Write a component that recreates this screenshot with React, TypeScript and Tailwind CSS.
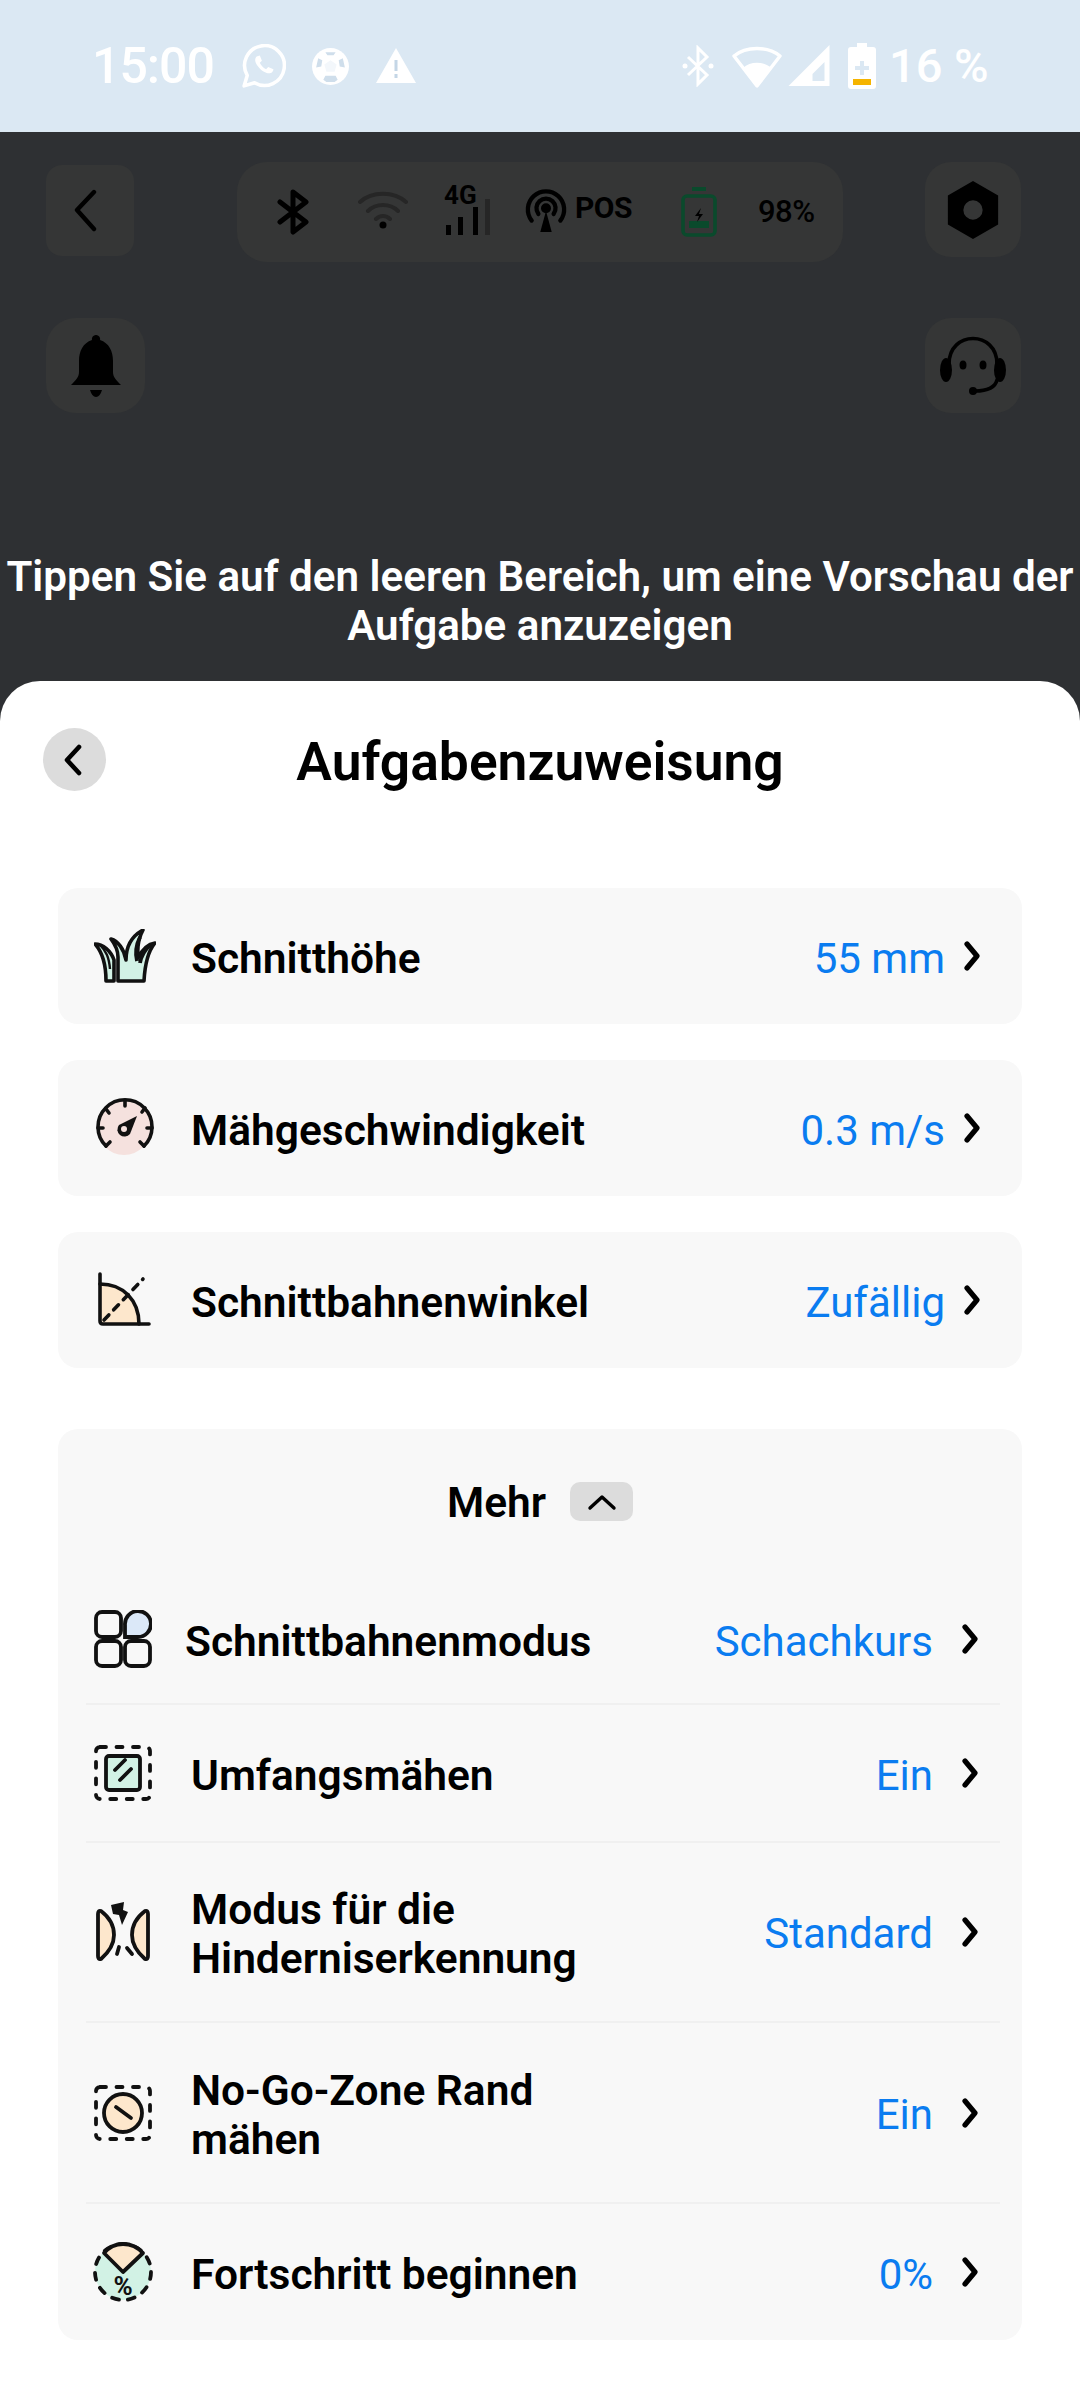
const font = { fontFamily: 'Roboto, sans-serif' };

const Chevron = () => (
  <svg width="18" height="30" viewBox="0 0 18 30" fill="none" stroke="#000" strokeWidth="5.2" strokeLinecap="round" strokeLinejoin="round" className="shrink-0">
    <path d="M4 3l10 12L4 27" />
  </svg>
);

const GrassIcon = () => (
  <svg width="62" height="54" viewBox="0 0 62 54" fill="#d2f2e5" stroke="#111" strokeWidth="3.6" strokeLinejoin="round">
    <path d="M1 15C9 15 17 22 20 31V52H12C12 38 9 24 1 15Z" />
    <path d="M24 52V28C24 20 20 14 17 10C24 12 30 20 32 31C32 18 38 7 49 1C44 10 43 18 44 29C48 21 54 15 61 14C55 21 51 34 50 52Z" />
    <path d="M6 16C12 22 15 28 16 40" fill="none" strokeWidth="2.4" />
    <path d="M46 8C42 16 41 24 43 32M56 16C50 22 47 28 46 34" fill="none" strokeWidth="3.8" />
  </svg>
);

const GaugeIcon = () => (
  <svg width="60" height="60" viewBox="0 0 60 60" fill="none" stroke="#111" strokeWidth="3.6" strokeLinecap="round">
    <circle cx="29" cy="30" r="27" fill="#f5e1de" stroke="none" />
    <path d="M11 48A27 27 0 1 1 49 48" />
    <path d="M30 3V8M11 11l3 4M3 30h5M50 10l-3 4M57 30h-5M11 48l4-4M49 48l-4-4" />
    <path d="M42 18L35 36A7 7 0 1 1 24 27Z" fill="#111" stroke="none" />
    <circle cx="29" cy="31" r="3" fill="#f5e1de" stroke="none" />
  </svg>
);

const AngleIcon = () => (
  <svg width="56" height="56" viewBox="0 0 56 56" fill="none" stroke="#111" strokeWidth="3.6" strokeLinecap="round" strokeLinejoin="round">
    <path d="M3 12C26 12 42 28 42 52H3Z" fill="#fde7cc" stroke="none" />
    <path d="M3 12C26 12 42 28 42 52" />
    <path d="M3 2V49Q3 52 6 52H52" />
    <path d="M7 48L46 7" strokeDasharray="7 7" />
  </svg>
);

const GridIcon = () => (
  <svg width="58" height="58" viewBox="0 0 58 58" fill="none" stroke="#111" strokeWidth="3.8">
    <rect x="2" y="2" width="25" height="25" rx="6" />
    <path d="M31 27V15A13 13 0 1 1 44 27H37Q31 27 31 27Z" fill="#dbe8f8" />
    <rect x="2" y="31" width="25" height="25" rx="6" />
    <rect x="31" y="31" width="25" height="25" rx="6" />
  </svg>
);

const DashBox = () => (
  <rect x="2" y="2" width="54" height="52" rx="4" fill="none" strokeDasharray="6 10.5" />
);

const PerimeterIcon = () => (
  <svg width="58" height="56" viewBox="0 0 58 56" fill="none" stroke="#111" strokeWidth="3.8" strokeLinecap="round">
    <DashBox />
    <rect x="12" y="11" width="34" height="34" rx="3" fill="#d2f2e5" />
    <path d="M21 25l10-10M26 35l11-11" />
  </svg>
);

const ObstacleIcon = () => (
  <svg width="54" height="60" viewBox="0 0 54 60" fill="none" stroke="#111" strokeWidth="3.8" strokeLinecap="round" strokeLinejoin="round">
    <path d="M2 12Q2 8 5 9C13 15 18 24 18 33C18 42 13 50 5 57Q2 58 2 54Z" fill="#fde7cc" />
    <path d="M52 12Q52 8 49 9C41 15 36 24 36 33C36 42 41 50 49 57Q52 58 52 54Z" fill="#fde7cc" />
    <path d="M15 3L28 0L27 8L32 10L26 23L23 13L17 12Z" fill="#111" stroke="none" />
    <path d="M23 45l-2 7M31 46l5 6" />
  </svg>
);

const NoGoIcon = () => (
  <svg width="58" height="56" viewBox="0 0 58 56" fill="none" stroke="#111" strokeWidth="3.8" strokeLinecap="round">
    <DashBox />
    <circle cx="29" cy="28" r="19" fill="#fde7cc" />
    <path d="M22 22l15 11" />
  </svg>
);

const ProgressIcon = () => (
  <svg width="62" height="62" viewBox="0 0 62 62" fill="none" stroke="#111" strokeWidth="3.8" strokeLinecap="round" strokeLinejoin="round">
    <circle cx="31" cy="31" r="28" fill="#d2f2e5" strokeDasharray="7 9" />
    <path d="M12 12C22 0 40 0 51 12L31 31Z" fill="#fde7cc" />
    <text x="31" y="54" textAnchor="middle" fontSize="26" fontWeight="700" fill="#111" stroke="none" style={font}>%</text>
  </svg>
);

const TopRow = ({ icon, label, value }: { icon: React.ReactNode; label: string; value: string }) => (
  <div className="flex items-center h-[136px] bg-[#f8f8f8] rounded-[20px]">
    <div className="w-[133px] shrink-0 flex justify-center">{icon}</div>
    <span className="pt-[5px] text-[42.5px] font-semibold text-black">{label}</span>
    <span className="pt-[5px] ml-auto text-[42px] text-[#0a7cf0]">{value}</span>
    <div className="ml-[18px] mr-[41px] flex"><Chevron /></div>
  </div>
);

const MoreRow = ({ icon, label, value, height, last, iconBox }: { icon: React.ReactNode; label: string; value: string; height: string; last?: boolean; iconBox?: string }) => (
  <div className={`flex items-center ml-[28px] mr-[22px] ${height} ${last ? '' : 'border-b-2 border-[#f0f0f0]'}`}>
    <div className={`shrink-0 flex justify-center ${iconBox ?? 'w-[105px] pr-[31px]'}`}>{icon}</div>
    <span className="pt-[4px] text-[42.5px] leading-[49px] font-semibold text-black w-[440px]">{label}</span>
    <span className="pt-[4px] ml-auto text-[42px] text-[#0a7cf0]">{value}</span>
    <div className="ml-[28px] mr-[21px] flex"><Chevron /></div>
  </div>
);

const StatusBar = () => (
  <div className="h-[132px] bg-[#dbe8f3] flex items-center text-white text-[50px] font-medium" style={font}>
    <span className="ml-[92px] w-[123px] tracking-[-1px]">15:00</span>
    <svg className="ml-[27px]" width="44" height="44" viewBox="0 0 42 42" fill="none" stroke="#fff" strokeWidth="3.4" strokeLinecap="round" strokeLinejoin="round">
      <path d="M2 40l3-10A19 19 0 1 1 12 37Z" />
      <path d="M14 12c-2 2-2 5 1 9s7 7 11 7c2 0 4-2 4-4l-5-2-2 2c-3-1-5-4-6-6l2-2-2-5Z" fill="#fff" stroke="none" />
    </svg>
    <svg className="ml-[25px]" width="39" height="39" viewBox="0 0 38 38">
      <circle cx="19" cy="19" r="18" fill="#fff" />
      <path d="M19 13l6 4-2 7h-8l-2-7Z" fill="#f3f7fb" />
      <path d="M7 11l4 2-1 6-5 1ZM31 11l-4 2 1 6 5 1ZM14 5h10l-2 3h-6ZM14 28h10l2 4-3 2h-8l-3-2Z" fill="#cfdeeb" />
    </svg>
    <svg className="ml-[26px]" width="40" height="38" viewBox="0 0 40 38">
      <path d="M20 1L40 36H0Z" fill="#fff" />
      <path d="M18.5 13h3v11h-3ZM18.5 27h3v4h-3Z" fill="#c4d6e6" />
    </svg>
    <div className="ml-auto flex items-center">
      <svg width="32" height="42" viewBox="0 0 32 42" fill="none" stroke="#fff" strokeWidth="3">
        <path d="M6 12l19 18-9 9V3l9 9L6 30" />
        <circle cx="3" cy="21" r="2.5" fill="#fff" stroke="none" />
        <circle cx="29" cy="21" r="2.5" fill="#fff" stroke="none" />
      </svg>
      <svg className="ml-[18px]" width="50" height="44" viewBox="0 0 50 44">
        <path d="M25 42L2 12C14 2 36 2 48 12Z" fill="none" stroke="#fff" strokeWidth="3.4" strokeLinejoin="round" />
        <path d="M25 43L11 24C18 17 32 17 39 24Z" fill="#fff" />
      </svg>
      <svg className="ml-[5px]" width="45" height="44" viewBox="0 0 42 44">
        <path fillRule="evenodd" d="M41 1V42H0ZM36 18L24 30V37H36Z" fill="#fff" />
      </svg>
      <svg className="ml-[15px]" width="30" height="46" viewBox="0 0 28 46">
        <path d="M9 0h10v4h6q3 0 3 3v36q0 3-3 3H3q-3 0-3-3V7q0-3 3-3h6Z" fill="#fff" />
        <rect x="5" y="36" width="18" height="6" fill="#f5b400" />
        <path d="M12 18h4v5h5v4h-5v5h-4v-5H7v-4h5Z" fill="#dbe8f3" />
      </svg>
      <span className="ml-[12px] mr-[93px] w-[98px] text-[47px] whitespace-nowrap">16 %</span>
    </div>
  </div>
);

const DarkHeader = () => (
  <div className="h-[549px] bg-[#2e3033] flex flex-col" style={font}>
    <div className="flex items-start mt-[30px] pl-[46px] pr-[59px]">
      <div className="mt-[3px] w-[88px] h-[91px] rounded-[16px] bg-[#353636] flex items-center justify-center pr-[8px]">
        <svg width="24" height="44" viewBox="0 0 24 44" fill="none" stroke="#000" strokeWidth="4.4" strokeLinecap="round" strokeLinejoin="round"><path d="M20 3L3 21l17 19" /></svg>
      </div>
      <div className="ml-[103px] w-[606px] h-[100px] rounded-[30px] bg-[#353636] flex items-center pl-[40px]">
        <svg width="32" height="46" viewBox="0 0 32 46" fill="none" stroke="#000" strokeWidth="5" strokeLinecap="round" strokeLinejoin="round"><path d="M3 13l26 20-13 10V3l13 10L3 33" /></svg>
        <svg className="ml-[49px] mb-[6px]" width="50" height="40" viewBox="0 0 50 40" fill="none" stroke="#262626" strokeWidth="4" strokeLinecap="round"><path d="M2 13C14 2 36 2 48 13M10 22C18 14 32 14 40 22M18 30C22 26 28 26 32 30" /><circle cx="25" cy="36" r="3.5" fill="#000" stroke="none" /></svg>
        <div className="ml-[36px] relative w-[48px] h-[46px]">
          <span className="absolute left-0 top-[-8px] text-[26px] font-bold leading-[28px] text-black">4G</span>
          <svg className="absolute left-0 top-[10px]" width="48" height="38" viewBox="0 0 48 38"><rect x="2" y="26" width="5" height="10" fill="#000" /><rect x="14" y="18" width="5" height="18" fill="#000" /><rect x="29" y="8" width="5" height="28" fill="#000" /><rect x="41" y="0" width="5" height="36" fill="#262626" /></svg>
        </div>
        <svg className="ml-[33px]" width="42" height="46" viewBox="0 0 44 46" fill="none" stroke="#000" strokeWidth="4.5" strokeLinecap="round"><path d="M7 32A19 19 0 1 1 37 32M14 25A10 10 0 1 1 30 25" /><circle cx="22" cy="19" r="3" fill="#000" /><path d="M22 22l6 22H16Z" fill="#000" stroke="none" /></svg>
        <span className="ml-[8px] mb-[10px] text-[30px] font-bold text-black tracking-[-0.5px]">POS</span>
        <svg className="ml-[49px]" width="36" height="50" viewBox="0 0 36 50" fill="none"><rect x="11" y="0" width="14" height="4" fill="#0a4a2c" /><rect x="2" y="9" width="32" height="39" rx="4" stroke="#0a4a2c" strokeWidth="3.6" /><rect x="8" y="34" width="20" height="7" fill="#0a4a2c" /><path d="M20 21l-6 8h4l-2 6 6-8h-4Z" fill="#000" /></svg>
        <span className="ml-[41px] text-[31px] font-medium text-black tracking-[-0.5px]">98%</span>
      </div>
      <div className="ml-[82px] w-[96px] h-[95px] rounded-[26px] bg-[#353636] flex items-center justify-center">
        <svg width="52" height="58" viewBox="0 0 52 60"><path fillRule="evenodd" d="M26 0L52 15V45L26 60L0 45V15ZM26 20A10 10 0 1 0 26 40A10 10 0 1 0 26 20Z" fill="#000" /></svg>
      </div>
    </div>
    <div className="flex items-center justify-between mt-[56px] pl-[46px] pr-[59px]">
      <div className="w-[99px] h-[95px] rounded-[30px] bg-[#353636] flex items-center justify-center">
        <svg width="50" height="62" viewBox="0 0 50 62"><path d="M25 0a4 4 0 0 1 4 5C38 8 42 16 42 26V37c0 5 3 8 8 13H0c5-5 8-8 8-13V26C8 16 12 8 21 5a4 4 0 0 1 4-5Z" fill="#000" /><path d="M19 55H31Q29 62 25 62T19 55Z" fill="#000" /></svg>
      </div>
      <div className="w-[96px] h-[95px] rounded-[26px] bg-[#353636] flex items-center justify-center">
        <svg width="70" height="60" viewBox="0 0 68 60" fill="none" stroke="#000" strokeWidth="3.6" strokeLinecap="round"><path d="M10 28C10 -6 58 -6 58 28" /><ellipse cx="7" cy="34" rx="6" ry="12" fill="#000" stroke="none" /><ellipse cx="61" cy="34" rx="6" ry="12" fill="#000" stroke="none" /><path d="M58 44C56 52 48 55 36 55" /><circle cx="34" cy="55" r="4" fill="#000" stroke="none" /><ellipse cx="24" cy="29" rx="3.5" ry="4.5" fill="#000" stroke="none" /><ellipse cx="44" cy="29" rx="3.5" ry="4.5" fill="#000" stroke="none" /></svg>
      </div>
    </div>
    <p className="mt-[139px] text-center text-white text-[42.2px] font-semibold leading-[49px] whitespace-nowrap">
      Tippen Sie auf den leeren Bereich, um eine Vorschau der<br />Aufgabe anzuzeigen
    </p>
  </div>
);

export default function App() {
  return (
    <div className="w-[1080px] h-[2400px] bg-[#2e3033] overflow-hidden" style={font}>
      <StatusBar />
      <DarkHeader />
      <div className="h-[1719px] bg-white rounded-t-[40px] px-[58px] relative">
        <div className="absolute left-[43px] top-[47px] w-[63px] h-[63px] rounded-full bg-[#dcdcdc] flex items-center justify-center pr-[4px]">
          <svg width="18" height="32" viewBox="0 0 18 32" fill="none" stroke="#000" strokeWidth="4.6" strokeLinecap="round" strokeLinejoin="round"><path d="M15 3L3 16l12 13" /></svg>
        </div>
        <h1 className="pt-[49px] text-center text-[53.4px] leading-[64px] font-semibold text-black">Aufgabenzuweisung</h1>
        <div className="mt-[94px] flex flex-col gap-[36px]">
          <TopRow icon={<GrassIcon />} label="Schnitthöhe" value="55 mm" />
          <TopRow icon={<GaugeIcon />} label="Mähgeschwindigkeit" value="0.3 m/s" />
          <TopRow icon={<AngleIcon />} label="Schnittbahnenwinkel" value="Zufällig" />
        </div>
        <div className="mt-[61px] h-[911px] bg-[#f8f8f8] rounded-[20px] flex flex-col">
          <div className="h-[146px] flex items-center justify-center">
            <span className="pt-[2px] text-[42.5px] font-semibold text-black">Mehr</span>
            <div className="ml-[24px] w-[63px] h-[39px] rounded-[10px] bg-[#dcdcdc] flex items-center justify-center">
              <svg width="30" height="18" viewBox="0 0 30 18" fill="none" stroke="#000" strokeWidth="3.4" strokeLinecap="round" strokeLinejoin="round"><path d="M3 15L15 4l12 11" /></svg>
            </div>
          </div>
          <MoreRow icon={<GridIcon />} label="Schnittbahnenmodus" value="Schachkurs" height="h-[131px]" iconBox="w-[99px] pr-[25px]" />
          <MoreRow icon={<PerimeterIcon />} label="Umfangsmähen" value="Ein" height="h-[138px]" />
          <MoreRow icon={<ObstacleIcon />} label="Modus für die Hinderniserkennung" value="Standard" height="h-[180px]" />
          <MoreRow icon={<NoGoIcon />} label="No-Go-Zone Rand mähen" value="Ein" height="h-[182px]" />
          <MoreRow icon={<ProgressIcon />} label="Fortschritt beginnen" value="0%" height="h-[136px]" last />
        </div>
      </div>
    </div>
  );
}
